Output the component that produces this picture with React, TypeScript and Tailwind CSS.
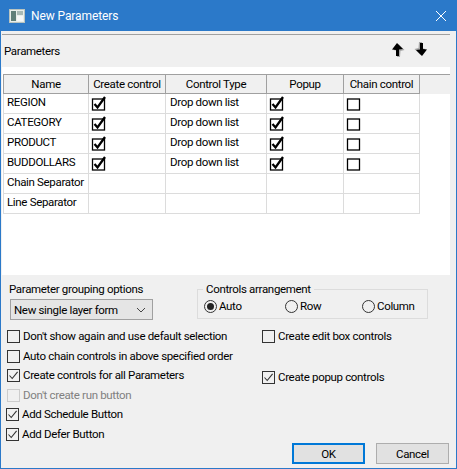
const headers = [
  { label: "Name", w: "w-[85px]" },
  { label: "Create control", w: "w-[77px]" },
  { label: "Control Type", w: "w-[101px]" },
  { label: "Popup", w: "w-[77px]" },
  { label: "Chain control", w: "w-[77px]" },
];

const rows = [
  { name: "REGION", param: true },
  { name: "CATEGORY", param: true },
  { name: "PRODUCT", param: true },
  { name: "BUDDOLLARS", param: true },
  { name: "Chain Separator", param: false },
  { name: "Line Separator", param: false },
];

function GridCheck({ checked }: { checked: boolean }) {
  return (
    <svg width="16" height="15" viewBox="0 0 16 15" className="block">
      <rect x="1.5" y="3" width="12" height="11" fill="#fff" stroke="#000" strokeWidth="1.3" />
      {checked && <path d="M3.5 8 L6.5 11.5 L14 1" fill="none" stroke="#000" strokeWidth="2.3" />}
    </svg>
  );
}

function Check({ checked, disabled, label, className }: { checked?: boolean; disabled?: boolean; label: string; className: string }) {
  return (
    <div className={`flex items-center h-[16px] ${className}`}>
      <span className={`w-[13px] h-[13px] border flex items-center justify-center shrink-0 ${disabled ? "border-[#cccccc]" : "border-[#333333]"}`}>
        {checked && (
          <svg width="11" height="11" viewBox="0 0 11 11">
            <path d="M1.5 5.5 L4.2 8.5 L9.6 1.8" fill="none" stroke="#333333" strokeWidth="1.1" />
          </svg>
        )}
      </span>
      <span className={`ml-[3px] whitespace-nowrap ${disabled ? "text-[#808080]" : "text-black"}`}>{label}</span>
    </div>
  );
}

function Radio({ checked, label, className }: { checked?: boolean; label: string; className: string }) {
  return (
    <div className={`flex items-center ${className}`}>
      <span className="w-[13px] h-[13px] rounded-full border border-[#333333] flex items-center justify-center shrink-0">
        {checked && <span className="w-[7px] h-[7px] rounded-full bg-[#222222]" />}
      </span>
      <span className="ml-[2px] whitespace-nowrap">{label}</span>
    </div>
  );
}

function ArrowIcon({ down }: { down?: boolean }) {
  return (
    <svg width="15" height="16" viewBox="0 0 15 16" className="block">
      <g transform={down ? "translate(14 15) scale(-1 -1)" : undefined}>
        <path d="M7.5 2 L13.5 8 L9.5 9 L9 15 L6 15 L7 9 L2.5 8 Z" fill="#888888" opacity="0.7" />
        <path d="M6 1 L12 7 L8 7.5 L8 14 L5 14 L5 8 L1 7.5 Z" fill="#000" />
      </g>
    </svg>
  );
}

export default function App() {
  return (
    <div className="w-[457px] h-[469px] flex flex-col bg-[#f0f0f0] border-x border-b border-[#2b79c9] font-['Roboto',sans-serif] text-[11.5px] leading-[16px] tracking-[-0.33px] text-black overflow-hidden">
      {/* Title bar */}
      <div className="h-[31px] -mx-px bg-[#2b79c9] flex items-center shrink-0 text-white">
        <svg width="16" height="14" viewBox="0 0 16 14" className="ml-[9px]">
          <rect x="0.5" y="0.5" width="15" height="13" fill="#e8eeea" stroke="#b9c4c0" />
          <rect x="2" y="2" width="5" height="10" fill="#5f7f78" />
          <rect x="8" y="2" width="6" height="4" fill="#a9bab5" />
          <rect x="8" y="7" width="6" height="5" fill="#f6f8f7" />
        </svg>
        <span className="ml-[6px] text-[12px] tracking-[-0.1px]">New Parameters</span>
        <svg width="12" height="12" viewBox="0 0 12 12" className="ml-auto mr-[10px]">
          <path d="M1 1 L11 11 M11 1 L1 11" stroke="#fff" strokeWidth="1" />
        </svg>
      </div>

      {/* Toolbar */}
      <div className="h-[33px] mt-[3px] ml-px mr-[6px] border-t border-[#a0a0a0] shrink-0 flex items-center pl-[2px]">
        <span>Parameters</span>
        <div className="ml-auto flex gap-[8px] mr-[21px] mb-[3px]">
          <ArrowIcon />
          <ArrowIcon down />
        </div>
      </div>

      {/* Grid panel */}
      <div className="h-[208px] ml-px mr-[6px] bg-white pt-[7px] pl-[1px] shrink-0">
        <div className="flex h-[20px] bg-[#f0f0f0] border-t border-[#a0a0a0]">
          {headers.map((h) => (
            <div key={h.label} className={`${h.w} border-l border-b border-[#a0a0a0] last:border-r flex items-center justify-center whitespace-nowrap`}>
              {h.label}
            </div>
          ))}
        </div>
        {rows.map((r) => (
          <div key={r.name} className="flex h-[20px] w-[417px] border-b border-[#dcdcdc]">
            <div className="w-[85px] border-l border-[#dcdcdc] pl-[3px] pb-[4px] flex items-center whitespace-nowrap">{r.name}</div>
            <div className="w-[77px] border-l border-[#dcdcdc] pl-[2px] flex items-center">{r.param && <GridCheck checked />}</div>
            <div className="w-[101px] border-l border-[#dcdcdc] pl-[4px] pb-[3px] flex items-center whitespace-nowrap">{r.param && "Drop down list"}</div>
            <div className="w-[77px] border-l border-[#dcdcdc] pl-[2px] flex items-center">{r.param && <GridCheck checked />}</div>
            <div className="w-[77px] border-l border-r border-[#dcdcdc] pl-[2px] flex items-center">{r.param && <GridCheck checked={false} />}</div>
          </div>
        ))}
      </div>

      {/* Options */}
      <div className="flex-1 flex">
        <div className="w-[258px] shrink-0 flex flex-col">
          <span className="mt-[6px] ml-[8px] whitespace-nowrap">Parameter grouping options</span>
          <div className="mt-[2px] ml-[9px] w-[143px] h-[21px] border border-[#a0a0a0] bg-[#e5e5e5] flex items-center pl-[3px] pr-[2px]">
            <span className="whitespace-nowrap">New single layer form</span>
            <svg width="10" height="6" viewBox="0 0 10 6" className="ml-auto mr-[4px]">
              <path d="M1 1 L5 5 L9 1" fill="none" stroke="#444" strokeWidth="1" />
            </svg>
          </div>
          <Check label="Don't show again and use default selection" className="mt-[8px] ml-[6px]" />
          <Check label="Auto chain controls in above specified order" className="mt-[4px] ml-[6px]" />
          <Check checked label="Create controls for all Parameters" className="mt-[3px] ml-[6px]" />
          <Check disabled label="Don't create run button" className="mt-[4px] ml-[6px]" />
          <Check checked label="Add Schedule Button" className="mt-[3px] ml-[5px]" />
          <Check checked label="Add Defer Button" className="mt-[4px] ml-[5px]" />
        </div>
        <div className="flex-1 flex flex-col">
          <fieldset className="-ml-[62px] mt-[9px] w-[231px] h-[35px] border border-[#dcdcdc] pl-[6px]">
            <legend className="-ml-[1px] px-[3px] leading-[10px]">Controls arrangement</legend>
            <div className="flex h-[16px] items-center mt-[4px]">
              <Radio checked label="Auto" className="w-[81px]" />
              <Radio label="Row" className="w-[77px]" />
              <Radio label="Column" className="w-[60px]" />
            </div>
          </fieldset>
          <Check label="Create edit box controls" className="mt-[9px] ml-[3px]" />
          <Check checked label="Create popup controls" className="mt-[25px] ml-[3px]" />
          <div className="mt-auto mb-[4px] flex justify-end gap-[11px] mr-[7px]">
            <button className="w-[73px] h-[21px] bg-[#e1e1e1] border-2 border-[#0078d7] flex items-center justify-center">OK</button>
            <button className="w-[73px] h-[21px] bg-[#e1e1e1] border border-[#adadad] flex items-center justify-center">Cancel</button>
          </div>
        </div>
      </div>
    </div>
  );
}
